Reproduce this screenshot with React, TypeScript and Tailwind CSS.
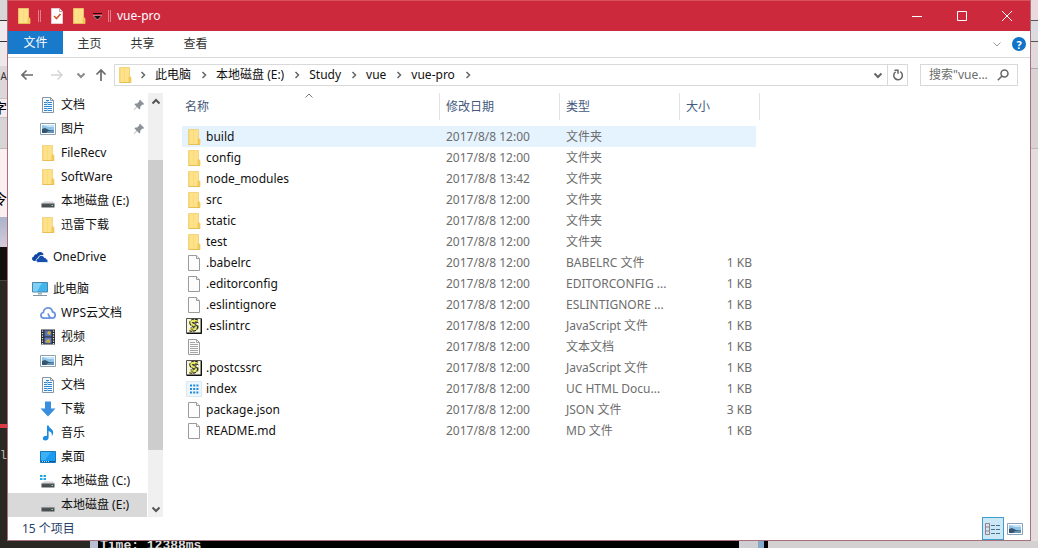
import type { ReactNode } from "react";

type IconProps = { className?: string };

function FolderIcon({ className = "" }: IconProps) {
  return (
    <svg viewBox="0 0 16 16" className={`size-4 shrink-0 ${className}`} aria-hidden="true">
      <path d="M2.500 0.500h10v9l1.500 1v5H2.500z" fill="#fde18b" stroke="#efcd70" strokeWidth="0.800" />
      <path d="M3.500 1v14M7.500 1v14" stroke="#fbd873" strokeWidth="0.800" />
      <path d="M11.500 15.500V10l1.200-1 1.300 1.500v5z" fill="#f2c956" />
      <path d="M2.500 15.500h11.500" stroke="#e5b94c" strokeWidth="0.800" />
    </svg>
  );
}

function FileIcon() {
  return (
    <svg viewBox="0 0 16 16" className="size-4 shrink-0" aria-hidden="true">
      <path d="M2.500 0.500h8l3 3v12h-11z" fill="#fdfdfd" stroke="#9b9b9b" />
      <path d="M10.500 0.500v3h3" fill="#eee" stroke="#9b9b9b" />
    </svg>
  );
}

function TextFileIcon() {
  return (
    <svg viewBox="0 0 16 16" className="size-4 shrink-0" aria-hidden="true">
      <path d="M2.500 0.500h8l3 3v12h-11z" fill="#fafafa" stroke="#9b9b9b" />
      <path d="M10.500 0.500v3h3M4 3.500h5M4 5.500h8M4 7.500h8M4 9.500h8M4 11.500h8M4 13.500h8" fill="none" stroke="#a6a6a6" />
    </svg>
  );
}

function ScriptIcon() {
  return (
    <svg viewBox="0 0 16 16" className="size-4 shrink-0" aria-hidden="true">
      <path d="M0.500 0.500h15v15h-15z" fill="#f8f8dc" stroke="#555" />
      <path d="M15.300 1v14.500M1 15.300h14.500" stroke="#111" strokeWidth="1.400" />
      <path d="M11.500 3.500C8.500 2.200 5 3 5.400 5c.4 2 4.800 2.200 4.500 4.400C9.600 11.500 6.500 12.200 4 11.200" fill="none" stroke="#222" strokeWidth="4.200" strokeDasharray="2.600 0.500" />
      <path d="M11.500 3.500C8.500 2.200 5 3 5.400 5c.4 2 4.800 2.200 4.500 4.400C9.600 11.500 6.500 12.200 4 11.200" fill="none" stroke="#e8e860" strokeWidth="2.400" />
      <path d="M6 4.500l2 .8M8 8.500l2.500-1M5.500 11l2 2M9.500 3.500l3 1.500M12 7.500v3" stroke="#222" strokeWidth="0.900" />
    </svg>
  );
}

function GridIcon() {
  return (
    <svg viewBox="0 0 16 16" className="size-4 shrink-0" aria-hidden="true">
      <path d="M0.500 0.500h15v15h-15z" fill="#edf6fc" stroke="#dbe9f3" />
      <path d="M4 4.500h8.500M4 8h8.500M4 11.500h8.500" stroke="#2389d9" strokeWidth="2" strokeDasharray="2 1.200" />
    </svg>
  );
}

function DocIcon() {
  return (
    <svg viewBox="0 0 16 16" className="size-4 shrink-0" aria-hidden="true">
      <path d="M2.500 0.500h8l3 3v12h-11z" fill="#f4faff" stroke="#8795a2" />
      <path d="M10.500 0.500v3h3" fill="none" stroke="#8795a2" />
      <path d="M6 3.500h3M4 5.500h3M8 5.500h4M4 7.500h3M8 7.500h4M4 9.500h8M4 11.500h3M8 11.500h4M4 13.500h3M8 13.500h4" stroke="#2f86d0" />
      <path d="M7.500 4v4M7.500 11v3" stroke="#9cc8ec" />
    </svg>
  );
}

function PictureIcon() {
  return (
    <svg viewBox="0 0 16 16" className="size-4 shrink-0" aria-hidden="true">
      <path d="M0.500 2.500h15v11h-15z" fill="#fff" stroke="#8ba0b2" />
      <path d="M2 4h12v8H2z" fill="#8fc4ea" />
      <path d="M2 4h12v2H8z" fill="#c5e2f6" />
      <path d="M2 8l3-1 4 2h5v3H2z" fill="#36546e" />
      <path d="M8 10l6-1v3H6z" fill="#6293b3" />
    </svg>
  );
}

function DriveIcon({ system = false }: { system?: boolean }) {
  return (
    <svg viewBox="0 0 16 16" className="size-4 shrink-0" aria-hidden="true">
      {system && <path d="M0 2h2.500v2H0zM3.500 2H6v2H3.500zM0 5h2.500v2H0zM3.500 5H6v2H3.500z" fill="#25a7df" />}
      <path d="M4 8.500h9l1.500 2h-13z" fill="#d2d4d6" />
      <path d="M1.500 10.500h13v4h-13z" fill="#4a4e52" />
      <path d="M1.500 10.700h13" stroke="#8b8f93" strokeWidth="0.700" />
      <path d="M11.500 12.500h1.500" stroke="#7de08a" />
    </svg>
  );
}

function OneDriveIcon() {
  return (
    <svg viewBox="0 0 16 16" className="size-4 shrink-0" aria-hidden="true">
      <path d="M5 12H2.500C1 12 0 11 0 9.800 0 8.500 1 7.700 2 7.600 2 5.800 3.500 5 4.700 5.200 5.500 3.500 7 2.800 8.500 3c1.800.200 2.800 1.300 3.200 2.600L8 7 5 10z" fill="#0d47a1" />
      <path d="M6.500 13.500C5 13.500 4.200 12.500 4.200 11.400c0-1.200.900-2 2-2.100C6.300 7.500 7.800 6.400 9.300 6.400c1.500 0 2.500.800 3 2 1.200-.100 2 .700 2.100 1.700 1 .200 1.600.900 1.600 1.800 0 .900-.700 1.600-1.600 1.600z" fill="#174fb0" stroke="#fff" strokeWidth="0.800" />
    </svg>
  );
}

function ComputerIcon() {
  return (
    <svg viewBox="0 0 16 16" className="size-4 shrink-0" aria-hidden="true">
      <path d="M0.500 1.500h15v9.500h-15z" fill="#42b4ee" stroke="#4c87a9" />
      <path d="M1 2h9L5 10.500H1z" fill="#7fd0f7" />
      <path d="M6 11.500h4v2H6z" fill="#9bb0bd" />
      <path d="M1 14.500h14" stroke="#8596a1" />
    </svg>
  );
}

function CloudIcon() {
  return (
    <svg viewBox="0 0 16 16" className="size-4 shrink-0" aria-hidden="true">
      <path d="M10.500 13.200H4C2.200 13.200 0.900 12 0.900 10.300c0-1.500 1.100-2.600 2.500-2.800C3.500 4.700 5.500 2.800 8 2.800c2.400 0 4.200 1.700 4.500 4.100 1.600.200 2.700 1.500 2.700 3.100 0 1.800-1.300 3.200-3.200 3.200-1.800 0-2.700-1.200-3-2.400L8 8.500" fill="none" stroke="#6a92de" strokeWidth="1.700" />
    </svg>
  );
}

function VideoIcon() {
  return (
    <svg viewBox="0 0 16 16" className="size-4 shrink-0" aria-hidden="true">
      <path d="M1 0.500h14v15H1z" fill="#26282d" />
      <path d="M2.500 1.500v14M13.500 1.500v14" stroke="#e6e6e6" strokeWidth="1.300" strokeDasharray="1.200 1.300" />
      <path d="M4.500 1.500h7v6h-7z" fill="#5570b8" />
      <path d="M4.500 8.500h7v6h-7z" fill="#657fc7" />
      <path d="M8 2l3 1-1 3-3-1zM5 13l3-3 2 1v3z" fill="#c9ac3b" />
    </svg>
  );
}

function DownloadIcon() {
  return (
    <svg viewBox="0 0 16 16" className="size-4 shrink-0" aria-hidden="true">
      <path d="M5 0.500h6v7h4.500L8 15.500 0.500 7.500H5z" fill="#3a8ede" />
    </svg>
  );
}

function MusicIcon() {
  return (
    <svg viewBox="0 0 16 16" className="size-4 shrink-0" aria-hidden="true">
      <path d="M7 0.500h1.600c.4 2.600 4.600 3.600 4.600 7 0 1.400-.5 2.600-1.300 3.500.4-2.700-1-4.200-3.300-4.900v6.400c0 1.700-1.500 3-3.300 3-1.500 0-2.500-.8-2.500-2 0-1.600 1.700-2.900 4.200-2.700z" fill="#1d8ce0" />
    </svg>
  );
}

function DesktopIcon() {
  return (
    <svg viewBox="0 0 16 16" className="size-4 shrink-0" aria-hidden="true">
      <path d="M0.500 2.500h15v11h-15z" fill="#189bf0" stroke="#1878bd" />
      <path d="M1 3h10L5 11H1z" fill="#3db0f8" />
      <path d="M1 12.500h14" stroke="#0d5a94" />
      <path d="M2 12.500h7" stroke="#a9dcff" strokeDasharray="1 1" />
    </svg>
  );
}

function PinIcon() {
  return (
    <svg viewBox="0 0 12 12" className="size-3 shrink-0" aria-hidden="true">
      <path d="M7 0.800L11.200 5l-1 .8-.8-.2-2.200 2.200.2 1.600-1 1-2.400-2.400L1 11l-.3-.3L3.600 7.600 1.400 5.400l1-1 1.700.2L6.300 2.500l-.2-.9z" fill="#8a9096" />
    </svg>
  );
}

type Direction = "up" | "down" | "right";
const chevronPaths: Record<Direction, string> = {
  up: "M1.500 6.500L5 3l3.500 3.500",
  down: "M1.500 3.500L5 7l3.500-3.500",
  right: "M3.500 2l3 3-3 3",
};

function Chevron({ to, className = "" }: { to: Direction; className?: string }) {
  return (
    <svg viewBox="0 0 10 10" className={`size-2.5 shrink-0 ${className}`} fill="none" stroke="currentColor" aria-hidden="true">
      <path d={chevronPaths[to]} />
    </svg>
  );
}

type NavItem = { label: string; icon: ReactNode; pinned?: boolean; root?: boolean; selected?: boolean };

const navGroups: NavItem[][] = [
  [
    { label: "文档", icon: <DocIcon />, pinned: true },
    { label: "图片", icon: <PictureIcon />, pinned: true },
    { label: "FileRecv", icon: <FolderIcon /> },
    { label: "SoftWare", icon: <FolderIcon /> },
    { label: "本地磁盘 (E:)", icon: <DriveIcon /> },
    { label: "迅雷下载", icon: <FolderIcon /> },
  ],
  [{ label: "OneDrive", icon: <OneDriveIcon />, root: true }],
  [
    { label: "此电脑", icon: <ComputerIcon />, root: true },
    { label: "WPS云文档", icon: <CloudIcon /> },
    { label: "视频", icon: <VideoIcon /> },
    { label: "图片", icon: <PictureIcon /> },
    { label: "文档", icon: <DocIcon /> },
    { label: "下载", icon: <DownloadIcon /> },
    { label: "音乐", icon: <MusicIcon /> },
    { label: "桌面", icon: <DesktopIcon /> },
    { label: "本地磁盘 (C:)", icon: <DriveIcon system /> },
    { label: "本地磁盘 (E:)", icon: <DriveIcon />, selected: true },
  ],
];

type Entry = { name: string; date?: string; type: string; size?: string; icon: ReactNode };

const entries: Entry[] = [
  { name: "build", type: "文件夹", icon: <FolderIcon /> },
  { name: "config", type: "文件夹", icon: <FolderIcon /> },
  { name: "node_modules", date: "2017/8/8 13:42", type: "文件夹", icon: <FolderIcon /> },
  { name: "src", type: "文件夹", icon: <FolderIcon /> },
  { name: "static", type: "文件夹", icon: <FolderIcon /> },
  { name: "test", type: "文件夹", icon: <FolderIcon /> },
  { name: ".babelrc", type: "BABELRC 文件", size: "1 KB", icon: <FileIcon /> },
  { name: ".editorconfig", type: "EDITORCONFIG ...", size: "1 KB", icon: <FileIcon /> },
  { name: ".eslintignore", type: "ESLINTIGNORE ...", size: "1 KB", icon: <FileIcon /> },
  { name: ".eslintrc", type: "JavaScript 文件", size: "1 KB", icon: <ScriptIcon /> },
  { name: "", type: "文本文档", size: "1 KB", icon: <TextFileIcon /> },
  { name: ".postcssrc", type: "JavaScript 文件", size: "1 KB", icon: <ScriptIcon /> },
  { name: "index", type: "UC HTML Docu...", size: "1 KB", icon: <GridIcon /> },
  { name: "package.json", type: "JSON 文件", size: "3 KB", icon: <FileIcon /> },
  { name: "README.md", type: "MD 文件", size: "1 KB", icon: <FileIcon /> },
];

const crumbs = ["此电脑", "本地磁盘 (E:)", "Study", "vue", "vue-pro"];

function TitleBar() {
  return (
    <header className="flex h-[31px] items-center border-t border-[#d9515f] bg-[#cc293d] text-white">
      <div className="flex items-center pl-2">
        <FolderIcon />
        <span className="ml-1.5 h-3 w-[3px] border-x border-[#e27f8b]" />
        <button aria-label="属性" className="ml-2.5">
          <svg viewBox="0 0 12 16" className="h-4 w-3" aria-hidden="true">
            <path d="M0.500 0.500h8l3 3v12h-11z" fill="#fff" stroke="#ecc8cc" />
            <path d="M8.500 0.500v3h3" fill="none" stroke="#b9a0a3" />
            <path d="M3 8l2.500 2.500L9.500 6" fill="none" stroke="#d5552e" strokeWidth="1.600" />
          </svg>
        </button>
        <button aria-label="新建文件夹" className="ml-2">
          <FolderIcon />
        </button>
        <button aria-label="自定义快速访问工具栏" className="ml-1.5">
          <svg viewBox="0 0 9 8" className="h-2 w-[9px]" aria-hidden="true">
            <path d="M0 1.500h9" stroke="#2a0a0e" />
            <path d="M0 3.500h9L4.500 8z" fill="#111" stroke="#f2c4ca" strokeWidth="0.600" />
          </svg>
        </button>
        <span className="ml-1.5 h-3 w-[3px] border-x border-[#e27f8b]" />
      </div>
      <h1 className="ml-1.5 text-xs">vue-pro</h1>
      <div className="ml-auto flex h-full">
        <button aria-label="最小化" className="flex w-[45px] items-center justify-center">
          <svg viewBox="0 0 12 12" className="size-3" stroke="currentColor"><path d="M1 6.500h10" /></svg>
        </button>
        <button aria-label="最大化" className="flex w-[45px] items-center justify-center">
          <svg viewBox="0 0 12 12" className="size-3" fill="none" stroke="currentColor"><path d="M1.500 1.500h9v9h-9z" /></svg>
        </button>
        <button aria-label="关闭" className="flex w-[46px] items-center justify-center">
          <svg viewBox="0 0 12 12" className="size-3" stroke="currentColor"><path d="M1 1l10 10M11 1L1 11" /></svg>
        </button>
      </div>
    </header>
  );
}

function RibbonTabs() {
  return (
    <div className="flex h-[27px] items-start border-b border-[#d9dadb]">
      <button className="h-[23px] w-[55px] bg-[#1979ca] text-white">文件</button>
      {["主页", "共享", "查看"].map((tab) => (
        <button key={tab} className="h-[26px] w-[53px] text-[#333]">{tab}</button>
      ))}
      <div className="ml-auto flex h-[26px] items-center gap-1.5 pr-1">
        <button aria-label="展开功能区" className="p-1 text-[#999]">
          <Chevron to="down" />
        </button>
        <button aria-label="帮助" className="flex size-3.5 items-center justify-center rounded-full bg-[#0f73c7] text-[11px] leading-none font-bold text-white">
          ?
        </button>
      </div>
    </div>
  );
}

function AddressBar() {
  return (
    <div className="flex h-[35px] items-start pt-1.5 pr-3">
      <div className="flex h-[22px] w-[106px] shrink-0 items-center pl-3 text-[#6a6a6a]">
        <button aria-label="后退">
          <svg viewBox="0 0 14 12" className="h-3 w-3.5" fill="none" stroke="currentColor" strokeWidth="1.700"><path d="M13 6H2M6.500 1.500L2 6l4.500 4.500" /></svg>
        </button>
        <button aria-label="前进" className="ml-4 text-[#d4d4d4]">
          <svg viewBox="0 0 14 12" className="h-3 w-3.5" fill="none" stroke="currentColor" strokeWidth="1.500"><path d="M1 6h11M7.500 1.500L12 6l-4.500 4.500" /></svg>
        </button>
        <button aria-label="最近浏览的位置" className="ml-3 text-[#8a8a8a]">
          <Chevron to="down" className="size-2 stroke-2" />
        </button>
        <button aria-label="上移" className="ml-2">
          <svg viewBox="0 0 14 14" className="size-3.5" fill="none" stroke="currentColor" strokeWidth="1.700"><path d="M7 13V2M2.500 6.500L7 2l4.500 4.500" /></svg>
        </button>
      </div>
      <div className="flex h-[22px] min-w-0 flex-1 items-center border border-[#d9d9d9]">
        <nav aria-label="地址" className="flex min-w-0 items-center pl-0.5">
          <FolderIcon />
          <Chevron to="right" className="ml-[5px] stroke-[1.500] text-[#666]" />
          {crumbs.map((crumb) => (
            <span key={crumb} className="flex items-center whitespace-nowrap">
              <a href="#" className="ml-[7px] text-[#111]">{crumb}</a>
              <Chevron to="right" className="ml-2 stroke-[1.500] text-[#666]" />
            </span>
          ))}
        </nav>
        <button aria-label="以前的位置" className="ml-auto flex w-[19px] justify-center text-[#666]">
          <Chevron to="down" className="stroke-2" />
        </button>
        <button aria-label="刷新" className="flex h-full w-5 items-center justify-center border-l border-[#d9d9d9] text-[#666]">
          <svg viewBox="0 0 12 12" className="size-3" fill="none" stroke="currentColor" strokeWidth="1.500">
            <path d="M8.200 2.700A4.300 4.300 0 1 1 3.600 2.900M2.500 1.200H6v3.500" />
          </svg>
        </button>
      </div>
      <label className="ml-3 flex h-[22px] w-[98px] items-center border border-[#d9d9d9] pr-2 pl-2">
        <input type="search" aria-label="搜索 vue-pro" placeholder={'搜索"vue...'} className="w-0 min-w-0 flex-1 appearance-none bg-transparent outline-none placeholder:text-[#6d6d6d] [&::-webkit-search-cancel-button]:hidden" />
        <svg viewBox="0 0 12 12" className="size-3 shrink-0" fill="none" stroke="#666" strokeWidth="1.500" aria-hidden="true">
          <circle cx="7.500" cy="4.500" r="3.500" />
          <path d="M5 7L0.800 11.200" />
        </svg>
      </label>
    </div>
  );
}

function NavPane() {
  return (
    <div className="flex w-[156px] shrink-0">
      <nav aria-label="导航窗格" className="flex w-[139px] flex-col gap-2">
        {navGroups.map((group, index) => (
          <ul key={index}>
            {group.map((item) => (
              <li key={item.label}>
                <a
                  href="#"
                  className={`flex h-6 items-center gap-[5px] pr-0.5 whitespace-nowrap ${item.root ? "pl-6" : "pl-8"} ${item.selected ? "bg-[#d9d9d9]" : ""}`}
                >
                  {item.icon}
                  <span className="flex-1">{item.label}</span>
                  {item.pinned && <PinIcon />}
                </a>
              </li>
            ))}
          </ul>
        ))}
      </nav>
      <div className="ml-px flex w-[15px] flex-col items-center bg-[#f0f0f0] text-[#555]">
        <button aria-label="向上滚动" className="flex h-[17px] items-center">
          <Chevron to="up" className="stroke-2" />
        </button>
        <div className="flex w-full flex-1 flex-col">
          <div className="h-[50px]" />
          <div className="h-[290px] bg-[#cdcdcd]" />
        </div>
        <button aria-label="向下滚动" className="flex h-[17px] items-center">
          <Chevron to="down" className="stroke-2" />
        </button>
      </div>
    </div>
  );
}

function FileList() {
  return (
    <main className="min-w-0 flex-1 pl-[18px]">
      <table className="w-[578px] table-fixed border-collapse text-left">
        <colgroup>
          <col className="w-[258px]" />
          <col className="w-[120px]" />
          <col className="w-[120px]" />
          <col className="w-[76px]" />
          <col className="w-1" />
        </colgroup>
        <thead className="text-[#44587c]">
          <tr>
            <th className="p-0 pb-1.5 font-normal">
              <button className="relative flex h-[27px] w-full items-center border-r border-[#e2e2e2] pl-[3px]">
                名称
                <Chevron to="up" className="absolute -top-0.5 left-[122px] text-[#777]" />
              </button>
            </th>
            <th className="p-0 pb-1.5 font-normal">
              <button className="flex h-[27px] w-full items-center border-r border-[#e2e2e2] pl-1.5">修改日期</button>
            </th>
            <th className="p-0 pb-1.5 font-normal">
              <button className="flex h-[27px] w-full items-center border-r border-[#e2e2e2] pl-1.5">类型</button>
            </th>
            <th className="p-0 pb-1.5 font-normal">
              <button className="flex h-[27px] w-full items-center pl-1.5">大小</button>
            </th>
            <td className="p-0 pb-1.5">
              <div className="h-[27px] border-r border-[#e2e2e2]" />
            </td>
          </tr>
        </thead>
        <tbody className="text-[#6d6d6d]">
          {entries.map((entry, index) => {
            const cell = index === 0 ? "h-[21px] whitespace-nowrap bg-[#e5f3ff]" : "h-[21px] whitespace-nowrap";
            return (
              <tr key={index}>
                <td className={`${cell} p-0 text-[#111]`}>
                  <span className="flex items-center gap-1 pl-1">
                    {entry.icon}
                    {entry.name}
                  </span>
                </td>
                <td className={`${cell} p-0 pl-1.5`}>{entry.date ?? "2017/8/8 12:00"}</td>
                <td className={`${cell} p-0 pl-1.5`}>{entry.type}</td>
                <td className={`${cell} p-0 pr-1 text-right`}>{entry.size}</td>
                <td className="p-0" />
              </tr>
            );
          })}
        </tbody>
      </table>
    </main>
  );
}

function StatusBar() {
  return (
    <footer className="flex h-[23px] items-center pl-3.5 text-[#27406b]">
      <span>15 个项目</span>
      <div className="ml-auto flex h-full items-center pr-[7px]">
        <button aria-label="详细信息" className="flex h-full w-[22px] items-center justify-center border border-[#3f9fcb] bg-[#cce8f6]">
          <svg viewBox="0 0 18 14" className="h-3.5 w-[18px]" fill="none" aria-hidden="true">
            <path d="M1.500 1.500h4v11h-4zM1.500 5h4M1.500 9h4" stroke="#9a7d86" />
            <path d="M7 3.500h10M7 7.500h10M7 11.500h10" stroke="#47718d" strokeDasharray="4 1" />
          </svg>
        </button>
        <button aria-label="大缩略图" className="ml-[3px]">
          <PictureIcon />
        </button>
      </div>
    </footer>
  );
}

function LeftBackdrop() {
  return (
    <div aria-hidden="true" className="flex w-[7px] shrink-0 flex-col overflow-hidden bg-[#2a2822] text-black">
      <div className="h-[21px] border-b border-[#333] bg-[#d9d6da]" />
      <div className="h-[21px] border-b border-[#333] bg-[#f0eaee]" />
      <div className="h-6 bg-[#eee8ea]" />
      <div className="flex h-8 items-start justify-end bg-[#dcd8da] pt-1 text-[10px] text-[#333]">A</div>
      <div className="flex h-5 items-center justify-end border-y border-[#c8c0c4] bg-[#f6ecee] text-sm">字</div>
      <div className="h-[31px] border-b border-[#b9b9b9] bg-[#d8d5d7]" />
      <div className="flex h-[68px] items-end justify-end bg-[#fbefef] pb-2 text-sm">令</div>
      <div className="h-[30px] bg-linear-to-b from-[#a8b4cc] to-[#d5cbd8]" />
      <div className="h-[34px] border-b border-[#444] bg-[#12100e]" />
      <div className="h-[143px]" />
      <div className="h-1 bg-[#d93a45]" />
      <div className="flex h-14 items-center justify-end font-['Liberation_Mono'] text-[#bbb]">gl</div>
    </div>
  );
}

function RightBackdrop() {
  return (
    <div aria-hidden="true" className="flex w-[7px] shrink-0 flex-col bg-[#e3dddd]">
      <div className="h-[21px] border-b border-[#555] bg-[#ecd9dd]" />
      <div className="h-[21px] border-b border-[#555] bg-[#dcdbe0]" />
      <div className="h-[27px] border-b border-[#aaa] bg-[#e0dadc]" />
      <div className="h-20 border-b border-[#bbb] bg-[#d9d3d4]" />
    </div>
  );
}

function BottomBackdrop() {
  return (
    <div aria-hidden="true" className="flex h-[7px] shrink-0 overflow-hidden bg-[#d4d1d2]">
      <div className="w-[90px] bg-[#2a2822]" />
      <div className="w-2 bg-[#b9bed2]" />
      <div className="flex w-[641px] items-start bg-black pl-0.5 font-['Liberation_Mono'] text-[13px] leading-[10px] font-bold text-[#ddd]">
        Time: 12388ms
      </div>
      <div className="w-[19px] bg-[#cfcfd3]" />
      <div className="w-1.5 bg-[#85a9c9]" />
      <div className="w-1 bg-black" />
    </div>
  );
}

export default function App() {
  return (
    <div className="flex min-h-screen flex-col bg-white font-['Noto_Sans','Noto_Sans_CJK_SC',sans-serif] text-xs text-[#111]">
      <div className="flex flex-1">
        <LeftBackdrop />
        <section aria-label="vue-pro" className="flex min-w-0 flex-1 flex-col border-r border-b border-l border-[#a8707c] bg-white">
          <TitleBar />
          <RibbonTabs />
          <AddressBar />
          <div className="flex flex-1">
            <NavPane />
            <FileList />
          </div>
          <StatusBar />
        </section>
        <RightBackdrop />
      </div>
      <BottomBackdrop />
    </div>
  );
}
